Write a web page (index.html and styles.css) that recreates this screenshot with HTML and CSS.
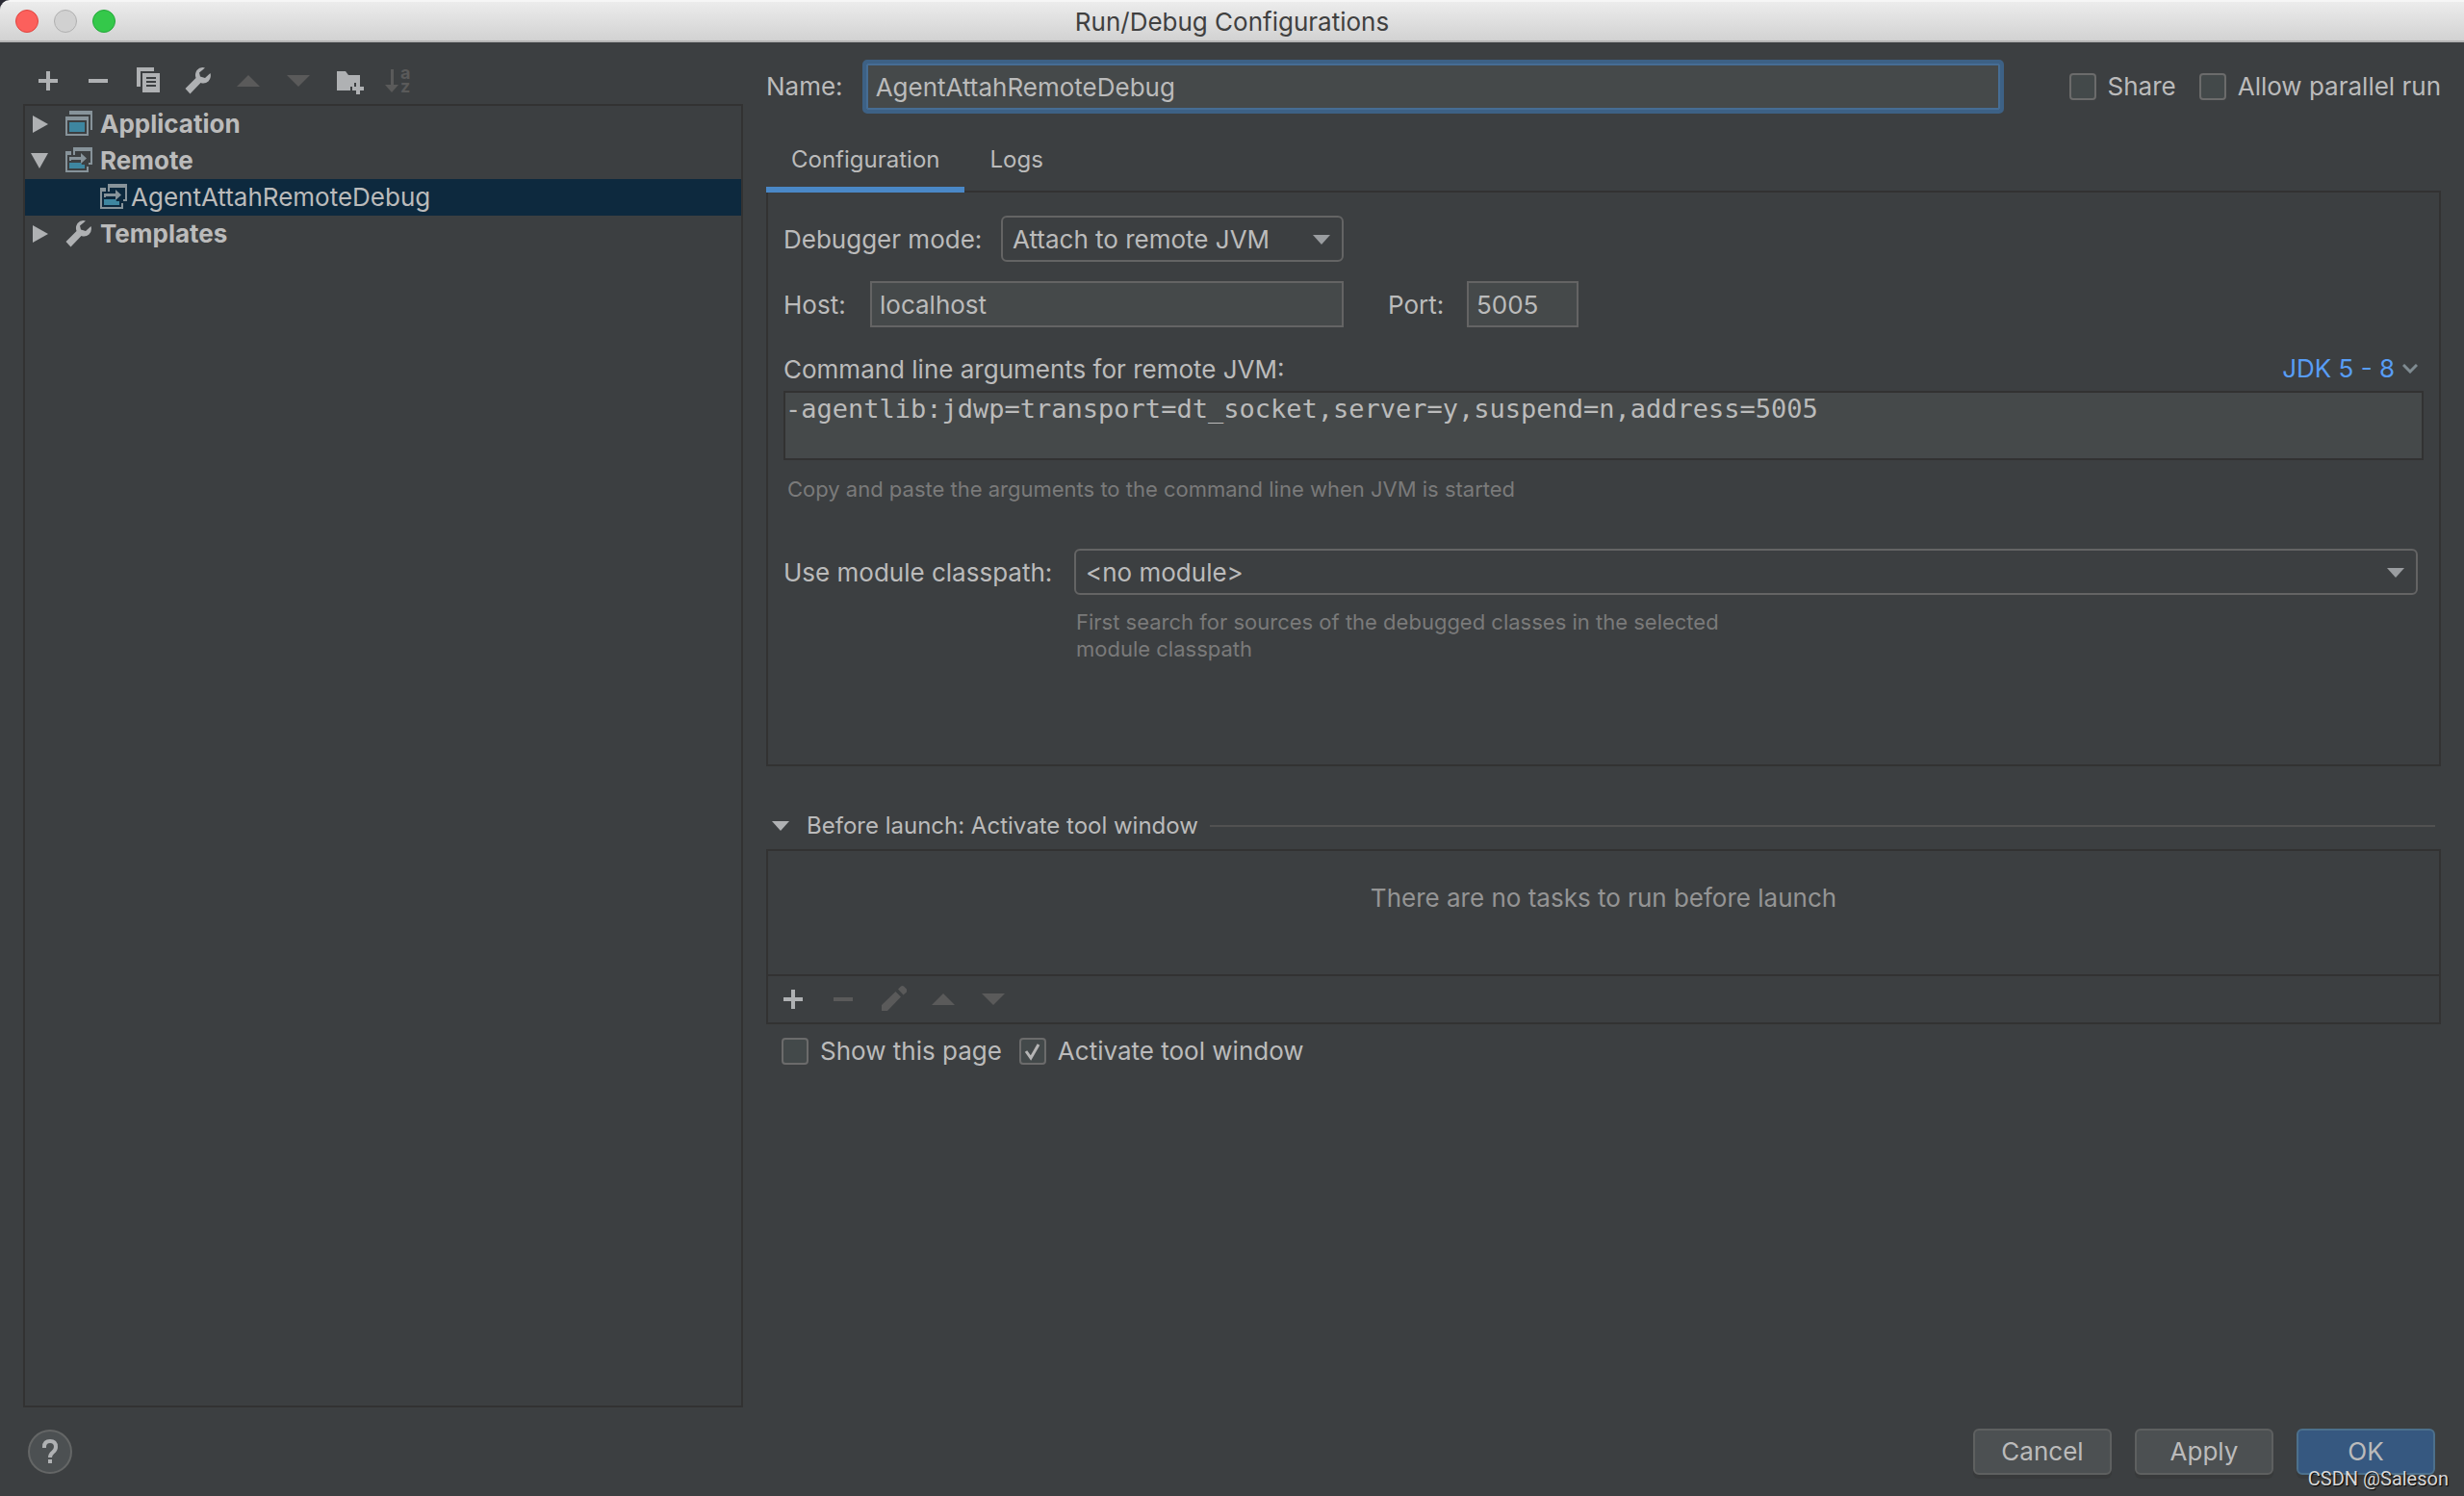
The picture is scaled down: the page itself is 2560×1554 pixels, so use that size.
FILE: index.html
```html
<!DOCTYPE html>
<html lang="en">
<head>
<meta charset="utf-8">
<title>Run/Debug Configurations</title>
<link rel="stylesheet" href="styles.css">
</head>
<body>
<svg class="symbols" aria-hidden="true">
  <symbol id="i-add" viewBox="0 0 32 32"><path d="M14 6h4v8h8v4h-8v8h-4v-8H6v-4h8z"/></symbol>
  <symbol id="i-remove" viewBox="0 0 32 32"><path d="M6 14h20v4H6z"/></symbol>
  <symbol id="i-copy" viewBox="0 0 32 32"><path d="M4 2h18v4H8v16H4z"/><path fill-rule="evenodd" d="M10 8h18v20H10zM14 12v2h10v-2zM14 16v2h10v-2zM14 20v2h10v-2z"/></symbol>
  <symbol id="i-wrench" viewBox="0 0 32 32"><path d="M23 2.500 Q18 1 14.500 5 Q12 9 13.500 13 L2.500 24 L7.500 29.500 L18.500 18 Q23 19.500 26.500 16.500 Q30 12.500 28.500 8 L23 13 L18 11.500 L17 7.500 Z"/></symbol>
  <symbol id="i-up" viewBox="0 0 32 32"><path d="M4 22L16 10L28 22z"/></symbol>
  <symbol id="i-down" viewBox="0 0 32 32"><path d="M4 10L16 22L28 10z"/></symbol>
  <symbol id="i-folder" viewBox="0 0 32 32"><path d="M4 6h9l3 4h12v8h-6v4h-4v4H4z"/><path d="M24 18h4v4h4v4h-4v4h-4v-4h-4v-4h4z"/></symbol>
  <symbol id="i-edit" viewBox="0 0 32 32"><path d="M4 28v-6L18.500 8l5.500 5.500L10 28zM21 5.500l3-3q1.500-1 3 0l3 3v3l-3.500 3z"/></symbol>
  <symbol id="i-app" viewBox="0 0 32 32"><path fill="#87939a" fill-rule="evenodd" d="M6 2h24v20h-2V6H6zM2 8h24v20H2zM4 12v14h20V12z"/><path fill="#3e86a0" d="M6 14h16v10H6z"/></symbol>
  <symbol id="i-remote" viewBox="0 0 32 32"><path fill="#87939a" d="M10 2h20v18h-4v-2h2V6H12v4h-2zM2 6h6v4H4v16h20v-4h2v6H2zM6 12h12V8l6 5.500L18 19v-4H8v1H6z"/><path fill="#3e86a0" d="M6 18h12l1 2h3v4H6z"/></symbol>
</svg>

<header class="titlebar">
  <div class="lights">
    <button class="light close" aria-label="Close"></button>
    <button class="light minimise" aria-label="Minimise" disabled></button>
    <button class="light full" aria-label="Zoom"></button>
  </div>
  <h1>Run/Debug Configurations</h1>
</header>

<main class="dialog">
  <aside class="sidebar">
    <div class="toolbar" role="toolbar">
      <button aria-label="Add"><svg><use href="#i-add"/></svg></button>
      <button aria-label="Remove"><svg><use href="#i-remove"/></svg></button>
      <button aria-label="Copy"><svg><use href="#i-copy"/></svg></button>
      <button aria-label="Edit templates"><svg><use href="#i-wrench"/></svg></button>
      <button aria-label="Move up" disabled><svg><use href="#i-up"/></svg></button>
      <button aria-label="Move down" disabled><svg><use href="#i-down"/></svg></button>
      <button aria-label="New folder"><svg><use href="#i-folder"/></svg></button>
      <button aria-label="Sort" disabled><svg class="sort" viewBox="0 0 32 32"><path d="M8 4h3v16h5l-7 8l-7-8h6z"/><text x="18" y="14">a</text><text x="18" y="28">z</text></svg></button>
    </div>
    <ul class="tree" role="tree">
      <li class="node" role="treeitem"><svg class="twisty" viewBox="0 0 20 20"><path d="M2 1L18 10L2 19z"/></svg><svg class="icon"><use href="#i-app"/></svg>Application</li>
      <li class="node" role="treeitem"><svg class="twisty" viewBox="0 0 20 20"><path d="M0 2H18L9 18z"/></svg><svg class="icon"><use href="#i-remote"/></svg>Remote</li>
      <li class="node leaf" role="treeitem" aria-selected="true"><svg class="icon"><use href="#i-remote"/></svg>AgentAttahRemoteDebug</li>
      <li class="node" role="treeitem"><svg class="twisty" viewBox="0 0 20 20"><path d="M2 1L18 10L2 19z"/></svg><svg class="icon"><use href="#i-wrench"/></svg>Templates</li>
    </ul>
  </aside>

  <section class="editor">
    <div class="name-row">
      <label for="name">Name:</label>
      <input class="field focused" id="name" type="text" value="AgentAttahRemoteDebug">
      <div class="options">
        <label class="check"><input type="checkbox">Share</label>
        <label class="check"><input type="checkbox">Allow parallel run</label>
      </div>
    </div>

    <div class="tabs" role="tablist">
      <button role="tab" aria-selected="true">Configuration</button>
      <button role="tab" aria-selected="false">Logs</button>
    </div>

    <div class="panel" role="tabpanel">
      <div class="row mode-row">
        <label for="mode">Debugger mode:</label>
        <div class="combo">
          <select id="mode"><option>Attach to remote JVM</option></select>
          <svg viewBox="0 0 18 10"><path d="M0 0H18L9 10z"/></svg>
        </div>
      </div>
      <div class="row host-row">
        <label for="host">Host:</label>
        <input class="field host" id="host" type="text" value="localhost">
        <label class="port-label" for="port">Port:</label>
        <input class="field port" id="port" type="text" value="5005">
      </div>
      <div class="args-head">
        <label for="args">Command line arguments for remote JVM:</label>
        <button class="jdk">JDK 5 - 8<svg viewBox="0 0 16 10"><path d="M1 1L8 8L15 1"/></svg></button>
      </div>
      <textarea class="args" id="args" readonly>-agentlib:jdwp=transport=dt_socket,server=y,suspend=n,address=5005</textarea>
      <p class="hint args-hint">Copy and paste the arguments to the command line when JVM is started</p>
      <div class="module">
        <label for="module">Use module classpath:</label>
        <div class="combo">
          <select id="module"><option>&lt;no module&gt;</option></select>
          <svg viewBox="0 0 18 10"><path d="M0 0H18L9 10z"/></svg>
        </div>
        <p class="hint">First search for sources of the debugged classes in the selected<br>module classpath</p>
      </div>
    </div>

    <h2 class="launch-head"><svg viewBox="0 0 18 10"><path d="M0 0H18L9 10z"/></svg>Before launch: Activate tool window</h2>
    <div class="launch">
      <p class="empty">There are no tasks to run before launch</p>
      <div class="toolbar" role="toolbar">
        <button aria-label="Add task"><svg><use href="#i-add"/></svg></button>
        <button aria-label="Remove task" disabled><svg><use href="#i-remove"/></svg></button>
        <button aria-label="Edit task" disabled><svg><use href="#i-edit"/></svg></button>
        <button aria-label="Move task up" disabled><svg><use href="#i-up"/></svg></button>
        <button aria-label="Move task down" disabled><svg><use href="#i-down"/></svg></button>
      </div>
    </div>
    <div class="launch-options">
      <label class="check"><input type="checkbox">Show this page</label>
      <label class="check"><input type="checkbox" checked>Activate tool window</label>
    </div>
  </section>
</main>

<footer class="footer">
  <button class="help" aria-label="Help"><svg viewBox="0 0 46 46"><path d="M17 19v-1q0-6 6-6t6 6q0 3-3 5.500t-3 5.500" /><path class="dot" d="M21 31h4v4h-4z"/></svg></button>
  <div class="actions">
    <button>Cancel</button>
    <button>Apply</button>
    <button class="primary">OK</button>
  </div>
  <span class="watermark">CSDN @Saleson</span>
</footer>
</body>
</html>
```
FILE: styles.css
```css
:root {
  --bg: #3c3f41;
  --field: #45494a;
  --text: #bbbbbb;
  --muted: #7a7a7a;
  --line: #323232;
  --edge: #646464;
  --icon: #afb1b3;
  --disabled: #5a5a5a;
}

* { box-sizing: border-box; }

body {
  margin: 0;
  min-height: 100vh;
  display: flex;
  flex-direction: column;
  background: var(--bg);
  color: var(--text);
  font: 26px/32px Inter, "Liberation Sans", sans-serif;
}

h1, h2, p, ul { margin: 0; padding: 0; }
button, input, select, textarea { font: inherit; color: inherit; margin: 0; }
button { border: 0; padding: 0; background: none; }
svg { display: block; fill: currentColor; }
.symbols { position: absolute; width: 0; height: 0; }

/* Title bar */
.titlebar {
  display: grid;
  grid-template-columns: 1fr auto 1fr;
  align-items: center;
  height: 44px;
  padding: 0 16px;
  background: linear-gradient(#ececec, #d2d2d2);
  border-top: 2px solid #f6f6f6;
  border-bottom: 2px solid #b4b4b4;
  border-radius: 10px 0 0 0;
  box-shadow: -10px -10px 0 #2b2b35;
  color: #404040;
}
.titlebar h1 { padding-top: 2px; font-size: 26px; font-weight: 400; }
.lights { display: flex; gap: 16px; }
.light { width: 24px; height: 24px; border-radius: 50%; border: 1px solid; }
.close { background: #fc605c; border-color: #e0443e; }
.minimise { background: #d1d1d1; border-color: #b0b0b0; }
.full { background: #34c84a; border-color: #24a83a; }

/* Body of the dialog */
.dialog {
  flex: 1;
  display: grid;
  grid-template-columns: 748px minmax(0, 1fr);
  gap: 24px;
  padding: 0 24px;
}
.sidebar { display: flex; flex-direction: column; }

.toolbar { display: flex; gap: 20px; color: var(--icon); }
.toolbar svg { width: 32px; height: 32px; }
.toolbar button:disabled { color: var(--disabled); }
.toolbar .sort { overflow: visible; }
.toolbar text { font: bold 18px Inter, sans-serif; }
.sidebar .toolbar { padding: 24px 10px 8px; }

.tree { flex: 1; border: 2px solid var(--line); list-style: none; }
.node {
  display: flex;
  align-items: center;
  height: 38px;
  padding-left: 6px;
  font-weight: 700;
}
.node .twisty { width: 20px; height: 20px; margin-right: 14px; color: var(--icon); }
.node .icon { width: 32px; height: 32px; margin-right: 6px; color: var(--icon); }
.leaf { padding-left: 76px; font-weight: 400; }
.leaf .icon { margin-right: 2px; }
.node[aria-selected="true"] { background: #0d293e; }

/* Form controls */
.field {
  height: 48px;
  min-width: 0;
  padding: 0 8px;
  border: 2px solid var(--edge);
  border-radius: 0;
  background: var(--field);
  outline: 0;
}
.focused {
  height: 48px;
  border-color: #466d94;
  outline: 4px solid #3d6185;
  border-radius: 1px;
}
.check { display: flex; align-items: center; gap: 12px; }
.check input {
  appearance: none;
  width: 28px;
  height: 28px;
  border: 2px solid #6b6b6b;
  border-radius: 4px;
  background: #43494a;
}
.check input:checked {
  background: #43494a url("data:image/svg+xml,%3Csvg xmlns='http://www.w3.org/2000/svg' viewBox='0 0 24 24'%3E%3Cpath d='M5 12l5 7L18 5' fill='none' stroke='%23b5b5b5' stroke-width='3'/%3E%3C/svg%3E");
}
.combo { position: relative; }
.combo select {
  appearance: none;
  display: block;
  width: 100%;
  height: 48px;
  padding: 2px 10px 0;
  border: 2px solid var(--edge);
  border-radius: 6px;
  background: var(--bg);
}
.combo svg {
  position: absolute;
  right: 14px;
  top: 20px;
  width: 18px;
  height: 10px;
  color: #9a9da0;
  pointer-events: none;
}

/* Right-hand side */
.name-row { display: flex; align-items: center; padding: 22px 0 4px; }
.name-row .field { flex: 1; margin: 0 72px 0 24px; }
.options { display: flex; gap: 24px; }

.tabs { display: flex; position: relative; margin: 14px 0 -2px; }
.tabs button {
  height: 68px;
  padding: 6px 26px 0;
  border-bottom: 6px solid transparent;
  font-size: 24px;
}
.tabs [aria-selected="true"] { border-color: #4a88c7; }

.panel {
  min-height: 598px;
  padding: 24px 16px;
  border: 2px solid var(--line);
}
.row { display: flex; align-items: center; margin-bottom: 20px; }
.panel label { padding-top: 2px; }
.mode-row label { width: 226px; }
.mode-row .combo { width: 356px; }
.host-row { margin-bottom: 26px; }
.host-row > label { width: 90px; }
.host { width: 492px; }
.host-row > .port-label { width: 128px; padding-left: 46px; }
.port { width: 116px; }
.args-head { display: flex; justify-content: space-between; margin-bottom: 6px; padding-right: 6px; }
.jdk { display: flex; align-items: center; gap: 8px; color: #589df6; }
.jdk svg { width: 16px; height: 10px; fill: none; stroke: #7f8b91; stroke-width: 3; }
.args {
  display: block;
  width: 100%;
  height: 72px;
  padding: 1px 0;
  border: 2px solid var(--line);
  border-radius: 0;
  background: var(--field);
  font: 27px/32px "DejaVu Sans Mono", monospace;
  resize: none;
  outline: 0;
  overflow: hidden;
}
.hint { color: var(--muted); font-size: 22px; line-height: 28px; }
.args-hint { margin: 16px 4px 48px; }
.module {
  display: grid;
  grid-template-columns: 302px minmax(0, 1fr);
  align-items: center;
  row-gap: 14px;
  padding-right: 6px;
}
.module .hint { grid-column: 2; padding-left: 2px; }

.launch-head {
  display: flex;
  align-items: center;
  margin: 46px 6px 8px;
  font-size: 24px;
  font-weight: 400;
}
.launch-head svg { width: 18px; height: 10px; margin-right: 18px; color: var(--icon); }
.launch-head::after { content: ""; flex: 1; height: 2px; margin-left: 12px; background: #515151; }
.launch { border: 2px solid var(--line); }
.empty { height: 128px; padding-top: 33px; text-align: center; color: #949494; }
.launch .toolbar { padding: 8px 10px; border-top: 2px solid var(--line); }
.launch-options { display: flex; gap: 18px; padding: 12px 16px; }

/* Footer */
.footer {
  position: relative;
  display: flex;
  align-items: center;
  justify-content: space-between;
  padding: 22px 30px 22px 29px;
}
.help {
  width: 46px;
  height: 46px;
  border: 2px solid #646666;
  border-radius: 50%;
  background: #4c5052;
}
.help svg { width: 46px; height: 46px; margin: -2px; fill: none; stroke: var(--icon); stroke-width: 4; }
.help .dot { fill: var(--icon); stroke: none; }
.actions { display: flex; gap: 24px; }
.actions button {
  width: 144px;
  height: 48px;
  border: 2px solid #5e6060;
  border-radius: 6px;
  background: #4c5052;
  box-shadow: 0 4px 0 #383a3b;
}
.actions .primary { border-color: #4c708c; background: #365880; }
.watermark {
  position: absolute;
  right: 16px;
  bottom: 4px;
  color: #d8d8d8;
  font: 20px/28px Roboto, sans-serif;
  text-shadow: 1px 1px 1px #000;
}
```
